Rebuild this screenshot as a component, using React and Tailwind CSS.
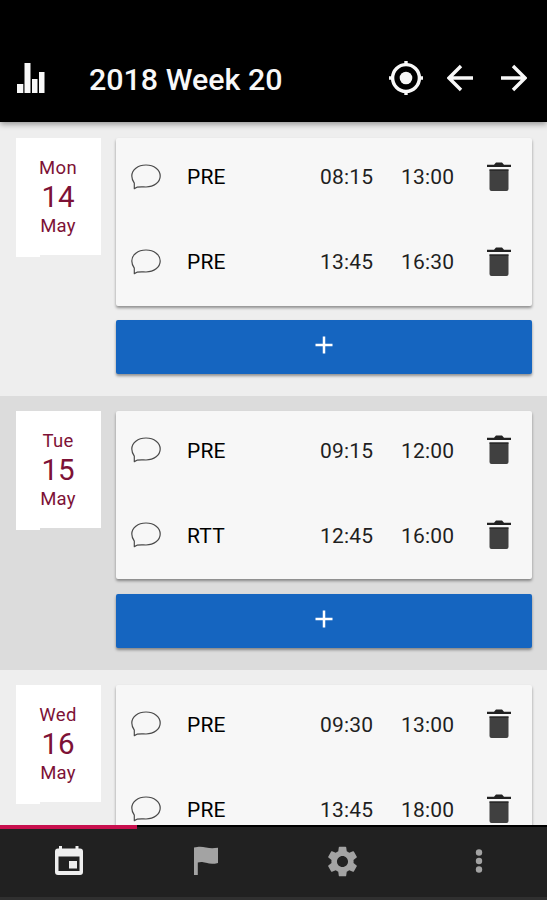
import { MdSettings } from "react-icons/md";

const days = [
    { name: "Mon", num: "14", month: "May", rows: [["PRE", "08:15", "13:00"], ["PRE", "13:45", "16:30"]] },
    { name: "Tue", num: "15", month: "May", rows: [["PRE", "09:15", "12:00"], ["RTT", "12:45", "16:00"]] },
    { name: "Wed", num: "16", month: "May", rows: [["PRE", "09:30", "13:00"], ["PRE", "13:45", "18:00"]] },
];

function ChartIcon() {
    return (
        <svg width="28" height="30" viewBox="0 0 28 30" fill="currentColor">
            <path d="M0 21h6.3v9H0zM7.5 0h6v30h-6zM15 16h5.5v14H15zM22 9h5.5v21H22z" />
        </svg>
    );
}

function LocateIcon() {
    return (
        <svg width="34" height="34" viewBox="0 0 34 34" fill="none" stroke="currentColor" strokeWidth="3.4">
            <circle cx="17" cy="17" r="13.4" />
            <circle cx="17" cy="17" r="6.3" fill="currentColor" stroke="none" />
            <path d="M17 0v4M17 30v4M0 17h4M30 17h4" />
        </svg>
    );
}

function ArrowIcon({ className }) {
    return (
        <svg className={className} width="26" height="28" viewBox="0 0 26 28" fill="none" stroke="currentColor" strokeWidth="3.4">
            <path d="M2 14h24M14 2L2 14l12 12" />
        </svg>
    );
}

function BubbleIcon() {
    return (
        <svg width="30" height="26" viewBox="0 0 30 26" fill="none" stroke="#4a4a4a" strokeWidth="1.2" strokeLinejoin="round">
            <path d="M3.3 24.6V19.2C1.800 17 .8 14.700 .8 12C.8 5.800 6.800 1 15 1S29.200 5.800 29.200 12S23 23 15 23C11.500 23 8.500 22.800 6 23.200Z" />
        </svg>
    );
}

function TrashIcon() {
    return (
        <svg width="24" height="30" viewBox="0 0 24 30" fill="#404040">
            <path d="M0 2.800h7L9 .5h6l2 2.300h7v2.200H0z" fill="#222" />
            <path d="M2.500 7.500h19V27a2 2 0 0 1-2 2h-15a2 2 0 0 1-2-2z" />
            <path d="M2.500 7.500h19v1.200h-19z" fill="#222" />
        </svg>
    );
}

function CalendarIcon() {
    return (
        <svg width="30" height="30" viewBox="0 0 30 30" fill="currentColor">
            <path fillRule="evenodd" d="M5 0h3v2.500h13.500V0h3v2.500H26a3 3 0 0 1 3 3V26a3 3 0 0 1-3 3H4a3 3 0 0 1-3-3V5.500a3 3 0 0 1 3-3h1zM4.500 10.500V25h21V10.500z" />
            <path d="M15 15h8v7.500h-8z" />
        </svg>
    );
}

function FlagIcon() {
    return (
        <svg width="24" height="30" viewBox="0 0 24 30" fill="currentColor">
            <path d="M0 1.500C5 .3 8 .5 12 1.500S19 2.500 24 1.800V17C19 18.300 16 18 12 16.800S6.500 15.800 3.800 16.400V29H0z" />
        </svg>
    );
}

function DotsIcon() {
    return (
        <svg width="8" height="26" viewBox="0 0 8 26" fill="currentColor">
            <circle cx="4" cy="4.500" r="3.200" />
            <circle cx="4" cy="13" r="3.200" />
            <circle cx="4" cy="21.500" r="3.200" />
        </svg>
    );
}

function Entry({ row }) {
    return (
        <div className="flex h-[78px] items-center pl-[15.500px] pr-[21px] text-[21px] text-[#1f1f1f]">
            <BubbleIcon />
            <span className="ml-[26px] w-[133px] pt-[2px] tracking-[0.2px] text-black">{row[0]}</span>
            <span className="w-[81px] pt-[2px] tracking-[0.2px]">{row[1]}</span>
            <span className="pt-[2px] tracking-[0.2px]">{row[2]}</span>
            <span className="ml-auto"><TrashIcon /></span>
        </div>
    );
}

function Day({ day, shaded }) {
    return (
        <section className={`flex h-[273.8px] shrink-0 gap-[15px] px-[15.500px] pt-[15.700px] ${shaded ? "bg-[#dcdcdc]" : "bg-[#eeeeee]"}`}>
            <div className="w-[85px] shrink-0 text-[#7d1236]">
                <div className="flex h-[117px] flex-col items-center bg-white pt-[17px]">
                    <span className="text-[18.5px] leading-[26px] tracking-[0.3px]">{day.name}</span>
                    <span className="text-[29.5px] leading-[32px]">{day.num}</span>
                    <span className="text-[18.5px] leading-[26px] tracking-[0.3px]">{day.month}</span>
                </div>
                <div className="h-[2px] w-[24px] bg-white" />
            </div>
            <div className="flex-1">
                <div className="flex h-[168px] flex-col gap-[7px] rounded-[2px] bg-[#f7f7f7] shadow-[0_2px_3px_rgba(0,0,0,0.4)]">
                    {day.rows.map((row, i) => <Entry key={i} row={row} />)}
                </div>
                <button className="mt-[14.500px] flex h-[54px] w-full items-center justify-center rounded-[2px] bg-[#1565c0] text-white shadow-[0_2px_3px_rgba(0,0,0,0.4)]">
                    <svg width="18" height="18" viewBox="0 0 18 18" stroke="currentColor" strokeWidth="2.500" className="mb-1">
                        <path d="M9 .5v17M.5 9h17" />
                    </svg>
                </button>
            </div>
        </section>
    );
}

export default function App() {
    return (
        <div className="flex h-[900px] w-[547px] flex-col overflow-hidden bg-[#eeeeee] font-['Roboto',sans-serif]">
            <header className="z-10 flex h-[122px] shrink-0 items-center bg-black pl-[17px] pr-[20px] pt-[33px] text-[#f8f8f8] shadow-[0_2px_6px_rgba(0,0,0,0.4)]">
                <ChartIcon />
                <h1 className="ml-[44px] mt-[4px] flex-1 whitespace-nowrap text-[30.4px] font-medium">2018 Week 20</h1>
                <LocateIcon />
                <ArrowIcon className="ml-[24px]" />
                <ArrowIcon className="ml-[28px] rotate-180" />
            </header>
            <main className="flex min-h-0 flex-1 flex-col overflow-hidden">
                {days.map((day, i) => <Day key={day.num} day={day} shaded={i % 2 === 1} />)}
            </main>
            <nav className="flex h-[75px] shrink-0 flex-col border-b-[3px] border-[#303030] bg-[#212121]">
                <div className="h-[2px] bg-black">
                    <div className="h-[4px] w-[137px] bg-[#c8104e]" />
                </div>
                <div className="grid flex-1 grid-cols-4 place-items-center pb-[2px] pl-px text-[#a3a3a3]">
                    <span className="text-[#eeeeee]"><CalendarIcon /></span>
                    <FlagIcon />
                    <MdSettings size={37} />
                    <DotsIcon />
                </div>
            </nav>
        </div>
    );
}
